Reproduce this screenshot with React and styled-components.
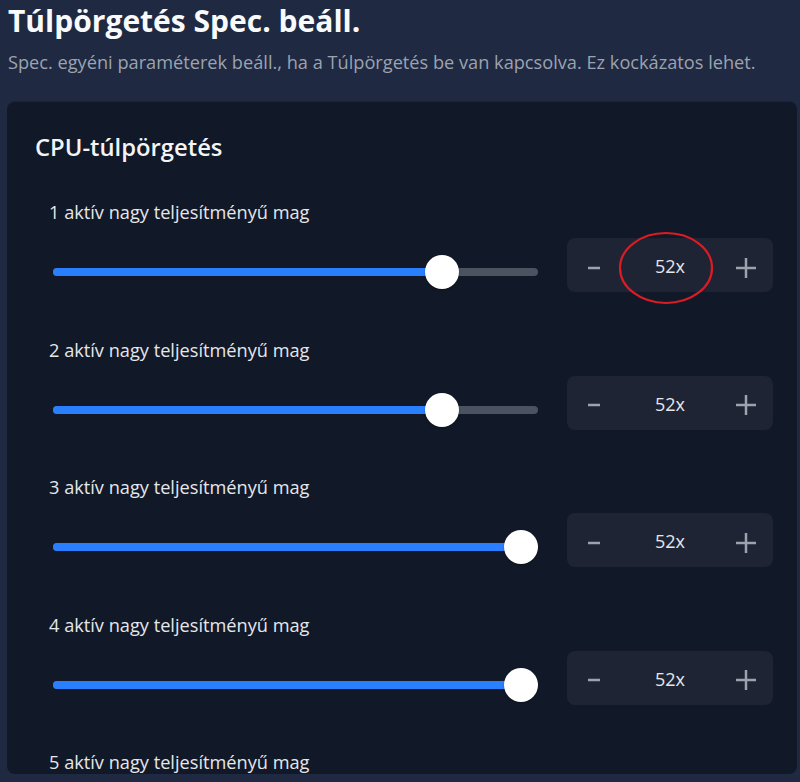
import React from "react";
import styled, { createGlobalStyle } from "styled-components";

const GlobalStyle = createGlobalStyle`
  html, body {
    margin: 0;
    padding: 0;
    background: #1f2942;
    font-family: "Open Sans", "Noto Sans", sans-serif;
    overflow: hidden;
  }
`;

const Page = styled.div`
  height: 782px;
  padding: 0 3px 0 7px;
  box-sizing: border-box;
`;

const Header = styled.header`
  padding: 3px 0 0 1px;
`;

const Title = styled.h1`
  margin: 0;
  font-size: 30px;
  font-weight: 700;
  line-height: 36px;
  color: #f9fafb;
`;

const Subtitle = styled.p`
  margin: 11px 0 0;
  font-size: 18.2px;
  line-height: 24px;
  color: #9ca3af;
`;

const Card = styled.section`
  margin-top: 27px;
  height: 673px;
  overflow: hidden;
  background: #111827;
  border-radius: 8px;
  border-top: 1px solid #1c2435;
  box-sizing: border-box;
  padding: 30px 24px 0 28px;
`;

const CardTitle = styled.h2`
  margin: 0;
  font-size: 23.8px;
  font-weight: 600;
  line-height: 30px;
  color: #f3f4f6;
`;

const CoreList = styled.div`
  margin-top: 38px;
  padding-left: 14px;
`;

const Core = styled.div`
  margin-bottom: 45.5px;
`;

const CoreLabel = styled.div`
  font-size: 18.2px;
  line-height: 24px;
  color: #e5e7eb;
`;

const ControlRow = styled.div`
  display: flex;
  align-items: center;
  gap: 29px;
  margin-top: 14px;
  padding-left: 4px;
`;

const Slider = styled.div`
  position: relative;
  flex: 1;
  height: 34px;
  margin-top: 14px;
`;

const Track = styled.div`
  position: absolute;
  left: 0;
  right: 0;
  top: 13px;
  height: 8px;
  border-radius: 4px;
  background: #4b5260;
`;

const Fill = styled.div`
  height: 100%;
  border-radius: 4px;
  background: #2a7fff;
`;

const Thumb = styled.div`
  position: absolute;
  top: 0;
  width: 34px;
  height: 34px;
  border-radius: 50%;
  background: #ffffff;
  box-shadow: 0 1px 2px rgba(0, 0, 0, 0.3);
`;

const Stepper = styled.div`
  position: relative;
  display: flex;
  align-items: center;
  width: 206px;
  height: 54px;
  border-radius: 8px;
  background: #1e2433;
`;

const StepButton = styled.button`
  width: 54px;
  height: 54px;
  display: flex;
  align-items: center;
  justify-content: center;
  padding: 0;
  padding-top: 5px;
  border: none;
  background: transparent;
  color: #9ca3af;
  cursor: pointer;
`;

const Value = styled.span`
  flex: 1;
  text-align: center;
  font-size: 18px;
  color: #e5e7eb;
  padding-top: 2px;
`;

const Mark = styled.svg`
  position: absolute;
  left: 51px;
  top: -7px;
  pointer-events: none;
`;

const cores = [
  { n: 1, frac: 0.825, marked: true },
  { n: 2, frac: 0.825 },
  { n: 3, frac: 1 },
  { n: 4, frac: 1 },
  { n: 5, frac: 1 },
];

const Minus = () => (
  <svg width="14" height="14" viewBox="0 0 14 14">
    <line x1="1" y1="7" x2="13" y2="7" stroke="currentColor" strokeWidth="2.5" />
  </svg>
);

const Plus = () => (
  <svg width="20" height="20" viewBox="0 0 20 20">
    <line x1="0" y1="10" x2="20" y2="10" stroke="currentColor" strokeWidth="2.5" />
    <line x1="10" y1="0" x2="10" y2="20" stroke="currentColor" strokeWidth="2.5" />
  </svg>
);

const CoreRow = ({ n, frac, marked }) => (
  <Core>
    <CoreLabel>{n} aktív nagy teljesítményű mag</CoreLabel>
    <ControlRow>
      <Slider>
        <Track>
          <Fill style={{ width: `calc(${frac} * (100% - 34px) + 17px)` }} />
        </Track>
        <Thumb style={{ left: `calc(${frac} * (100% - 34px))` }} />
      </Slider>
      <Stepper>
        <StepButton aria-label="Csökkentés">
          <Minus />
        </StepButton>
        <Value>52x</Value>
        <StepButton aria-label="Növelés">
          <Plus />
        </StepButton>
        {marked && (
          <Mark width="96" height="74" viewBox="0 0 96 74">
            <ellipse cx="48" cy="37" rx="46" ry="35" fill="none" stroke="#dc1c24" strokeWidth="2.2" />
          </Mark>
        )}
      </Stepper>
    </ControlRow>
  </Core>
);

export default function App() {
  return (
    <>
      <GlobalStyle />
      <Page>
        <Header>
          <Title>Túlpörgetés Spec. beáll.</Title>
          <Subtitle>
            Spec. egyéni paraméterek beáll., ha a Túlpörgetés be van kapcsolva. Ez kockázatos lehet.
          </Subtitle>
        </Header>
        <Card>
          <CardTitle>CPU-túlpörgetés</CardTitle>
          <CoreList>
            {cores.map((c) => (
              <CoreRow key={c.n} {...c} />
            ))}
          </CoreList>
        </Card>
      </Page>
    </>
  );
}
